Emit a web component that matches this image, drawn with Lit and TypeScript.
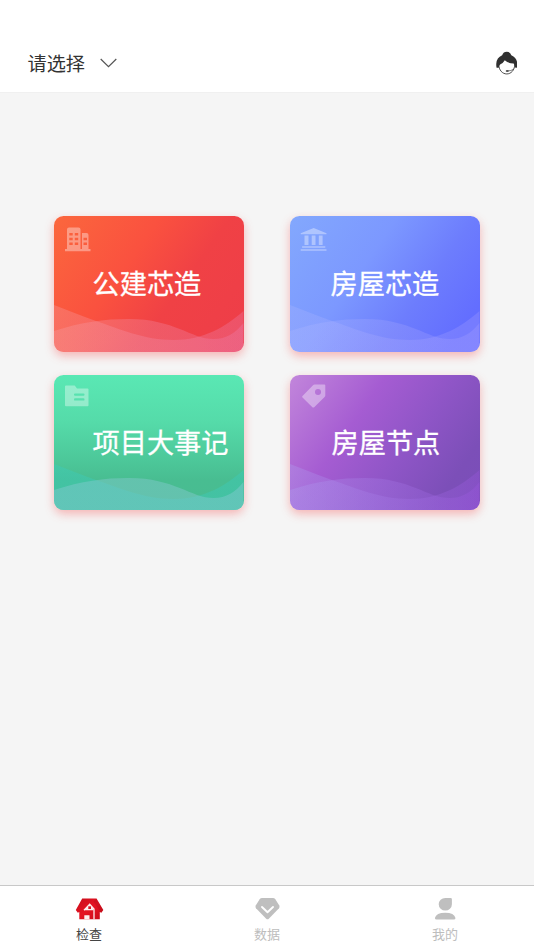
import { LitElement, html, css, svg } from "lit";
import { customElement, property } from "lit/decorators.js";

const cardIcons: Record<string, unknown> = {
  building: svg`<path fill-rule="evenodd" d="M2 22V2.500Q2 .5 4 .5H13.500Q15.500 .5 15.500 2.500V22H17V6H21.500Q23.500 6 23.500 8V22H25.500V24.200H0V22ZM4.300 6v2.500h3.400V6ZM9.800 6v2.500h3.400V6ZM4.300 10.800v2.500h3.400v-2.500ZM9.800 10.800v2.500h3.400v-2.500ZM4.300 15.500V18h3.400v-2.500ZM9.800 15.500V18h3.400v-2.500ZM18.500 10.800v2.500H22v-2.500ZM18.500 15.500V18H22v-2.500Z"/>`,
  bank: svg`<path d="M-.3 6.200L12.700 1L25.500 6.200V7.300H-.3ZM3.500 8.500H7.500V18H3.500ZM10.700 8.500H14.500V18H10.700ZM17.800 8.500H21.600V18H17.800ZM1.100 19.200H24.300V20.800H1.100ZM-.3 22.200H25.500V23.800H-.3Z"/>`,
  folder: svg`<path fill-rule="evenodd" d="M1 .5H9.700L12 3.400H22.500Q23.500 3.400 23.500 4.400V20.300Q23.500 21.300 22.500 21.300H1Q0 21.300 0 20.300V1.500Q0 .5 1 .5ZM10 8.400Q9 8.400 9 9.600T10 10.800H18.500Q19.500 10.800 19.500 9.600T18.500 8.400ZM10 13.200Q9 13.200 9 14.400T10 15.600H18.500Q19.500 15.600 19.500 14.400T18.500 13.200Z"/>`,
  tag: svg`<path fill-rule="evenodd" d="M13.500 -.4H23.500Q24.300 -.4 24.300 .5V10.400Q24.300 11.300 23.600 12L13.200 22.200Q12.300 22.900 11.400 22.200L1.500 12.600Q.7 11.800 1.500 11L12 .2Q12.700 -.4 13.500 -.4ZM17 3.900A3 3 0 1 0 17 9.900A3 3 0 1 0 17 3.900Z"/>`,
};

const tabIcons: Record<string, unknown> = {
  house: svg`
    <defs><linearGradient id="roof" x1="0" y1="0" x2="1" y2="1"><stop stop-color="#c70d1b"/><stop offset=".5" stop-color="#e51322"/><stop offset="1" stop-color="#c90b18"/></linearGradient></defs>
    <path fill="url(#roof)" d="M7.200 1.500H21.500L28.300 12.900L26.300 15.700L24.800 14.900V22.200H4.300V14.900L2.800 15.700L.8 12.900Z"/>
    <path fill="#8e0812" d="M21.500 1.500L28.300 12.900L26.300 15.700L18.500 4.500Z" opacity=".2"/>
    <path fill="none" stroke="#fdeeee" stroke-width="1.300" d="M9 13.200L14.700 7.200L19 12V22.200"/>
    <path fill="#fdeeee" d="M10 12.300L14.500 7.600L18.500 12V13.200H10ZM9.300 18.200H14.500V22.200H9.300Z"/>
    <path fill="#db1120" d="M13.300 9.300H16V12H13.300Z"/>`,
  diamond: svg`
    <path fill="#bfbfbf" d="M9 1H20Q21.500 1 22.300 2.200L26.300 8.500Q27 10 26 11.200L15.800 21.700Q14.500 23 13.200 21.700L3 11.200Q2 10 2.700 8.500L6.700 2.200Q7.500 1 9 1Z"/>
    <path fill="none" stroke="#fff" stroke-width="1.900" stroke-linecap="round" stroke-linejoin="round" d="M9 10L14.500 15.200L20 10"/>`,
  person: svg`
    <path fill="#bfbfbf" d="M14.300 1H19.700Q20.900 1 20.900 2.200V7.300A6.600 6.300 0 1 1 14.300 1ZM3.900 21Q5.200 15.800 14.200 15.800T24.500 21Q24.500 22.500 22.700 22.500H5.700Q3.900 22.500 3.900 21Z"/>`,
};

@customElement("menu-card")
class MenuCard extends LitElement {
  @property() label = "";
  @property() icon = "";
  @property({ reflect: true }) tone = "";

  static styles = css`
    :host {
      display: grid;
      box-sizing: border-box;
      height: 135.500px;
      border-radius: 9.500px;
      overflow: hidden;
      color: #fff;
      box-shadow: 0 4px 10px rgba(246, 93, 93, 0.42);
    }
    :host([tone="red"]) {
      background: linear-gradient(125deg, #fb673d 0%, #fa513f 38%, #f04145 62%, #ee3d49 100%);
      --left: rgba(247, 160, 165, 0.32);
      --right: rgba(236, 130, 180, 0.3);
    }
    :host([tone="blue"]) {
      background: linear-gradient(125deg, #83a8fd 0%, #7c98ff 38%, #6d7dfd 65%, #636eff 88%);
      --left: rgba(185, 190, 255, 0.22);
      --right: rgba(175, 165, 255, 0.25);
    }
    :host([tone="green"]) {
      background: linear-gradient(180deg, #5ae8b4 0%, #55dba9 35%, #48bd91 78%, #49bb91 100%);
      --left: rgba(60, 203, 187, 0.42);
      --right: rgba(60, 203, 187, 0.42);
      --front-left: rgba(135, 202, 211, 0.43);
      --front-right: rgba(135, 202, 211, 0.43);
    }
    :host([tone="purple"]) {
      background: linear-gradient(125deg, #c286db 0%, #a55cd2 34%, #8e55c6 60%, #7c4fb8 83%, #7a4eb9 100%);
      --left: rgba(175, 160, 240, 0.33);
      --right: rgba(158, 88, 225, 0.3);
    }
    .waves, .content { grid-area: 1 / 1; }
    .waves { display: block; width: 100%; height: 100%; }
    .from { stop-color: var(--left); }
    .to { stop-color: var(--right); }
    .front-from { stop-color: var(--front-left, var(--left)); }
    .front-to { stop-color: var(--front-right, var(--right)); }
    .content {
      display: flex;
      flex-direction: column;
      align-items: flex-start;
      padding: 10.500px 0 0 11px;
    }
    .icon { width: 26px; height: 25px; overflow: visible; fill: rgba(255, 255, 255, 0.37); }
    .label {
      margin: 10.500px 0 0 27.500px;
      font: 400 27.200px/40px "Noto Sans CJK SC", sans-serif;
      -webkit-text-stroke: 0.300px #fff;
      white-space: nowrap;
    }
    :host([tone="blue"]) .label { margin-left: 29.500px; }
    :host([tone="purple"]) .label { margin-left: 30.500px; }
  `;

  render() {
    return html`
      <svg class="waves" viewBox="0 0 190 135.500" preserveAspectRatio="none">
        <defs>
          <linearGradient id="back"><stop class="from" /><stop class="to" offset="1" /></linearGradient>
          <linearGradient id="front"><stop class="front-from" /><stop class="front-to" offset="1" /></linearGradient>
        </defs>
        <path fill="url(#back)" d="M0 89C14 94 27 100 42 105C66 113 90 124 120 124C150 124 172 111 190 95V136H0Z" />
        <path fill="url(#front)" d="M0 115C28 106 50 103 75 103C121 103 137 123 160 123C173 123 182 117 190 107V136H0Z" />
      </svg>
      <div class="content">
        <svg class="icon" viewBox="0 0 26 25">${cardIcons[this.icon]}</svg>
        <div class="label">${this.label}</div>
      </div>`;
  }
}

@customElement("app-root")
class AppRoot extends LitElement {
  static styles = css`
    :host {
      display: flex;
      flex-direction: column;
      height: 100vh;
      background: #f5f5f5;
      font-family: "Noto Sans CJK SC", sans-serif;
    }
    .header {
      box-sizing: border-box;
      height: 92px;
      padding: 34px 17px 0 27.500px;
      display: flex;
      align-items: center;
      justify-content: space-between;
      background: #fff;
      box-shadow: 0 0 1px #ddd;
    }
    .picker { display: flex; align-items: center; gap: 15px; color: #333; font-size: 19.200px; line-height: 28px; }
    .chevron { width: 17px; height: 10px; }
    .service { width: 21.500px; height: 24px; }
    .grid {
      flex: 1;
      display: grid;
      grid-template-columns: 189.500px 189.500px;
      align-content: start;
      gap: 23.200px 46.500px;
      padding: 124px 0 0 54px;
    }
    .tabs {
      box-sizing: border-box;
      height: 65.500px;
      display: grid;
      grid-template-columns: repeat(3, 1fr);
      border-top: 1px solid #c8c8c8;
      background: #fff;
    }
    .tab {
      display: flex;
      flex-direction: column;
      align-items: center;
      padding-top: 11px;
      color: #bdbdbd;
      font-size: 13px;
      line-height: 20px;
    }
    .tab.active { color: #444; }
    .tab svg { width: 29px; height: 24px; margin-bottom: 3px; }
  `;

  cards = [
    { label: "公建芯造", icon: "building", tone: "red" },
    { label: "房屋芯造", icon: "bank", tone: "blue" },
    { label: "项目大事记", icon: "folder", tone: "green" },
    { label: "房屋节点", icon: "tag", tone: "purple" },
  ];
  tabs = [
    { label: "检查", icon: "house" },
    { label: "数据", icon: "diamond" },
    { label: "我的", icon: "person" },
  ];

  render() {
    return html`
      <header class="header">
        <div class="picker">
          <span>请选择</span>
          <svg class="chevron" viewBox="0 0 17 10"><path d="M.7 1L8.500 8.700L16.300 1" fill="none" stroke="#555" stroke-width="1.200" /></svg>
        </div>
        <svg class="service" viewBox="0 0 22 24">
          <path d="M2.800 13C2.800 19.500 6.700 23.200 11 23.200S19.200 19.500 19.200 13" fill="#fff" stroke="#333" stroke-width=".9" />
          <path d="M.6 16.800Q.1 15 .3 12.500Q.6 6.500 6.300 4Q7.500 .5 11 .5T15.700 4Q21.400 6.500 21.700 12.500Q21.900 15 21.400 16.800L19.300 16.500Q19.300 13.500 18 12.500Q12.500 12.500 9 9.200Q7.500 12 4.200 13.500Q3 14.500 2.800 16.800Z" fill="#303030" />
          <path d="M18.500 18Q15.500 20.300 11.500 20.200" fill="none" stroke="#444" stroke-width=".7" />
          <rect x="10" y="19.400" width="3" height="1.500" rx=".7" fill="#333" />
        </svg>
      </header>
      <main class="grid">
        ${this.cards.map((c) => html`<menu-card label=${c.label} icon=${c.icon} tone=${c.tone}></menu-card>`)}
      </main>
      <nav class="tabs">
        ${this.tabs.map((t, i) => html`
          <div class="tab ${i === 0 ? "active" : ""}">
            <svg viewBox="0 0 29 24">${tabIcons[t.icon]}</svg>
            <span>${t.label}</span>
          </div>`)}
      </nav>`;
  }
}
